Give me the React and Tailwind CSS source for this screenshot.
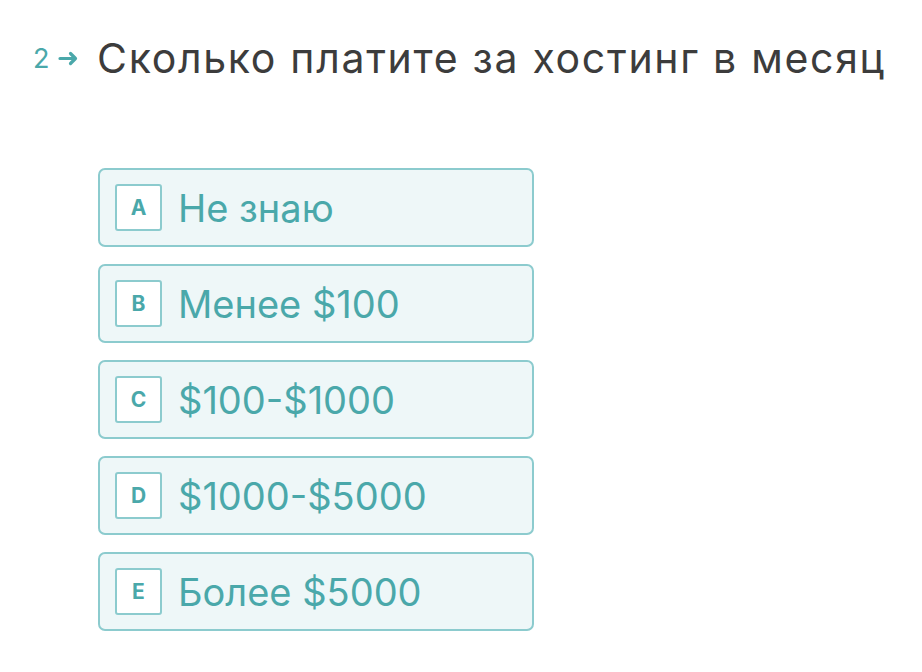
const options = [
  { key: 'A', label: 'Не знаю' },
  { key: 'B', label: 'Менее $100' },
  { key: 'C', label: '$100-$1000' },
  { key: 'D', label: '$1000-$5000' },
  { key: 'E', label: 'Более $5000' },
];

function ArrowRight() {
  return (
    <svg width="21" height="15" viewBox="0 0 21 15" fill="none" className="text-[#4aa8aa]">
      <path d="M2 7.5h15M12.5 2.5l5 5-5 5" stroke="currentColor" strokeWidth="3.2" strokeLinecap="round" strokeLinejoin="round" />
    </svg>
  );
}

export default function App() {
  return (
    <div className="w-[922px] h-[672px] bg-white font-['Inter','Liberation_Sans',sans-serif]">
      <div className="flex items-center pt-[32px] pl-[33px]">
        <div className="flex items-center gap-[9px] w-[64px]">
          <span className="text-[27px] text-[#4aa8aa] leading-none">2</span>
          <ArrowRight />
        </div>
        <h1 className="text-[41px] text-[#3c3c3c] leading-[52px] tracking-[1.7px]">Сколько платите за хостинг в месяц</h1>
      </div>
      <div className="flex flex-col gap-[17px] mt-[84px] ml-[98px] w-[436px]">
        {options.map((o) => (
          <div
            key={o.key}
            className="flex items-center h-[79px] px-[15px] gap-[16px] rounded-[7px] border-2 border-[#8ccbce] bg-[#eef7f8]"
          >
            <div className="flex items-center justify-center w-[47px] h-[47px] rounded-[3px] border-2 border-[#8ccbce] bg-white text-[21px] font-bold text-[#4aa8aa]">
              {o.key}
            </div>
            <span className="text-[38px] text-[#4aa8aa] leading-none">{o.label}</span>
          </div>
        ))}
      </div>
    </div>
  );
}
